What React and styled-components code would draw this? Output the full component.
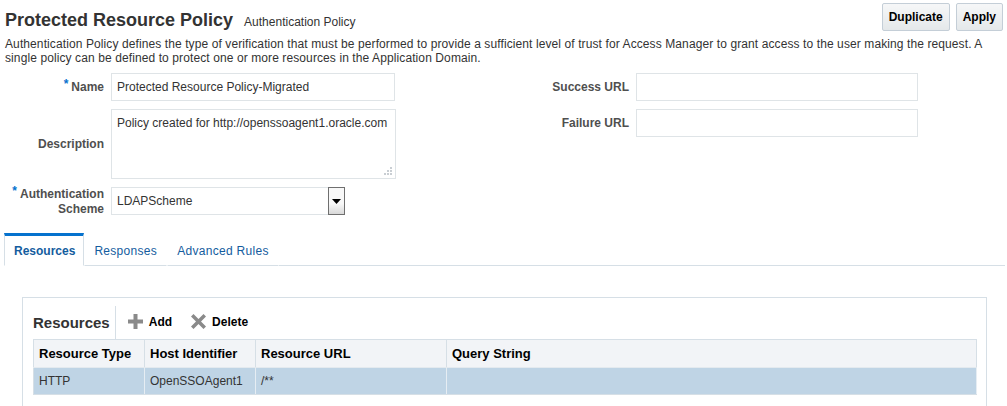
import styled, { createGlobalStyle } from "styled-components";

const GlobalStyle = createGlobalStyle`
  body {
    margin: 0;
    background: #fff;
    font-family: "Liberation Sans", Arial, sans-serif;
    font-size: 12px;
    color: #333;
  }
`;

const App = () => {
  return (
    <Page>
      <GlobalStyle />
      <Header>
        <TitleGroup>
          <Title>Protected Resource Policy</Title>
          <SubTitle>Authentication Policy</SubTitle>
        </TitleGroup>
        <Buttons>
          <Button>Duplicate</Button>
          <Button>Apply</Button>
        </Buttons>
      </Header>
      <Intro>
        Authentication Policy defines the type of verification that must be performed to provide a sufficient level of trust for Access Manager to grant access to the user making the request. A
        single policy can be defined to protect one or more resources in the Application Domain.
      </Intro>

      <Form>
        <LeftGrid>
          <Label>
            <Star>*</Star>Name
          </Label>
          <Input>Protected Resource Policy-Migrated</Input>
          <Label>Description</Label>
          <TextArea>
            Policy created for http://openssoagent1.oracle.com
            <Grip viewBox="0 0 9 9">
              <rect x="6" y="0" width="2" height="2" />
              <rect x="3" y="3" width="2" height="2" />
              <rect x="6" y="3" width="2" height="2" />
              <rect x="0" y="6" width="2" height="2" />
              <rect x="3" y="6" width="2" height="2" />
              <rect x="6" y="6" width="2" height="2" />
            </Grip>
          </TextArea>
          <Label $twoLine>
            <Star>*</Star>Authentication
            <br />
            Scheme
          </Label>
          <Select>
            <SelectValue>LDAPScheme</SelectValue>
            <SelectButton>
              <svg width="9" height="5" viewBox="0 0 9 5">
                <path d="M0 0h9L4.5 5z" fill="#000" />
              </svg>
            </SelectButton>
          </Select>
        </LeftGrid>
        <RightGrid>
          <Label>Success URL</Label>
          <Input $wide />
          <Label>Failure URL</Label>
          <Input $wide />
        </RightGrid>
      </Form>

      <Tabs>
        <Tab $active>Resources</Tab>
        <Tab>Responses</Tab>
        <Tab>Advanced Rules</Tab>
        <TabFill />
      </Tabs>

      <Panel>
        <Toolbar>
          <ToolbarTitle>Resources</ToolbarTitle>
          <ToolButton>
            <svg width="15" height="15" viewBox="0 0 15 15">
              <path d="M5.5 0h4v5.5H15v4H9.5V15h-4V9.5H0v-4h5.5z" fill="#8a8a8a" />
            </svg>
            Add
          </ToolButton>
          <ToolButton>
            <svg width="15" height="15" viewBox="0 0 15 15">
              <path d="M2.5 0L7.5 5 12.5 0 15 2.5 10 7.5 15 12.5 12.5 15 7.5 10 2.5 15 0 12.5 5 7.5 0 2.5z" fill="#8a8a8a" />
            </svg>
            Delete
          </ToolButton>
        </Toolbar>
        <Table>
          <colgroup>
            <col style={{ width: 111 }} />
            <col style={{ width: 111 }} />
            <col style={{ width: 191 }} />
            <col />
          </colgroup>
          <thead>
            <tr>
              <Th>Resource Type</Th>
              <Th>Host Identifier</Th>
              <Th>Resource URL</Th>
              <Th>Query String</Th>
            </tr>
          </thead>
          <tbody>
            <tr>
              <Td>HTTP</Td>
              <Td>OpenSSOAgent1</Td>
              <Td>/**</Td>
              <Td></Td>
            </tr>
          </tbody>
        </Table>
      </Panel>
    </Page>
  );
};

const Page = styled.div`
  width: 1007px;
  height: 406px;
  overflow: hidden;
`;
const Header = styled.div`
  display: flex;
  justify-content: space-between;
  align-items: flex-start;
  padding: 3px 4px 0 5px;
`;
const TitleGroup = styled.div`
  display: flex;
  align-items: baseline;
  gap: 11px;
  padding-top: 7px;
`;
const Title = styled.h1`
  margin: 0;
  font-size: 18px;
  font-weight: bold;
  color: #333;
  line-height: 20px;
`;
const SubTitle = styled.span`
  font-size: 12px;
  color: #333;
`;
const Buttons = styled.div`
  display: flex;
  gap: 6px;
`;
const Button = styled.div`
  height: 26px;
  line-height: 26px;
  padding: 0 6px;
  border: 1px solid #c4ced7;
  border-radius: 2px;
  background: linear-gradient(#f6f7f8, #e4e8ea);
  font-weight: bold;
  font-size: 12px;
  color: #000;
`;
const Intro = styled.p`
  margin: 6px 0 0 5px;
  max-width: 985px;
  line-height: 14px;
  font-size: 12px;
  letter-spacing: 0.1px;
  color: #333;
`;
const Form = styled.div`
  display: flex;
  margin-top: 8px;
`;
const LeftGrid = styled.div`
  display: grid;
  grid-template-columns: 99px auto;
  column-gap: 7px;
  row-gap: 8px;
  align-items: center;
  padding-left: 5px;
`;
const RightGrid = styled.div`
  display: grid;
  grid-template-columns: 124px auto;
  column-gap: 7px;
  row-gap: 8px;
  align-content: start;
  align-items: center;
  margin-left: 109px;
`;
const Label = styled.div`
  text-align: right;
  font-weight: bold;
  color: #4f4f4f;
  font-size: 12px;
  line-height: 15px;
  white-space: nowrap;
  margin-bottom: ${(p) => (p.$twoLine ? "-2px" : "0")};
`;
const Star = styled.span`
  color: #0572ce;
  font-size: 12px;
  margin-right: 3px;
  position: relative;
  top: -3px;
`;
const Input = styled.div`
  box-sizing: border-box;
  width: ${(p) => (p.$wide ? "282px" : "284px")};
  height: 28px;
  border: 1px solid #dfe4e7;
  background: #fff;
  padding: 0 5px;
  line-height: 26px;
  font-size: 12px;
  color: #333;
`;
const TextArea = styled.div`
  box-sizing: border-box;
  position: relative;
  width: 285px;
  height: 70px;
  border: 1px solid #dfe4e7;
  padding: 6px 5px;
  line-height: 14px;
  color: #333;
`;
const Grip = styled.svg`
  position: absolute;
  right: 2px;
  bottom: 2px;
  width: 9px;
  height: 9px;
  fill: #c9ced3;
`;
const Select = styled.div`
  display: flex;
  width: 234px;
  height: 28px;
`;
const SelectValue = styled.div`
  flex: 1;
  box-sizing: border-box;
  border: 1px solid #dfe4e7;
  border-right: none;
  padding: 0 5px;
  line-height: 26px;
  color: #333;
`;
const SelectButton = styled.div`
  box-sizing: border-box;
  width: 17px;
  border: 1px solid #6f6f6f;
  background: linear-gradient(#f8f8f8 60%, #d8d8d8);
  display: flex;
  align-items: center;
  justify-content: center;
`;
const Tabs = styled.div`
  display: flex;
  margin-top: 18px;
  padding-left: 4px;
`;
const Tab = styled.div`
  height: 29px;
  line-height: 31px;
  padding: ${(p) => (p.$active ? "0 8px 0 9px" : "0 9px")};
  font-size: 12px;
  letter-spacing: ${(p) => (p.$active ? "0" : "0.3px")};
  color: #145c9e;
  font-weight: ${(p) => (p.$active ? "bold" : "normal")};
  border-top: 3px solid ${(p) => (p.$active ? "#0572ce" : "transparent")};
  border-left: 1px solid ${(p) => (p.$active ? "#d6dfe6" : "transparent")};
  border-right: 1px solid ${(p) => (p.$active ? "#d6dfe6" : "transparent")};
  border-bottom: 1px solid ${(p) => (p.$active ? "transparent" : "#d6dfe6")};
`;
const TabFill = styled.div`
  flex: 1;
  border-bottom: 1px solid #d6dfe6;
  margin-right: 2px;
`;
const Panel = styled.div`
  margin: 31px 20px 0 22px;
  border: 1px solid #d6dfe6;
  border-bottom: none;
  height: 120px;
  padding: 8px 10px 0 10px;
`;
const Toolbar = styled.div`
  display: flex;
  align-items: center;
  height: 33px;
`;
const ToolbarTitle = styled.div`
  font-size: 15px;
  font-weight: bold;
  color: #333;
  padding: 8px 5px 0 0;
  height: 25px;
  border-right: 1px solid #d6dfe6;
  margin-right: 12px;
`;
const ToolButton = styled.div`
  display: flex;
  align-items: center;
  gap: 6px;
  font-weight: bold;
  color: #000;
  margin-right: 19px;
  margin-top: -2px;
`;
const Table = styled.table`
  width: 944px;
  border-collapse: collapse;
  table-layout: fixed;
  border: 1px solid #d6dfe6;
`;
const Th = styled.th`
  text-align: left;
  height: 27px;
  padding: 0 5px;
  background: #f2f4f7;
  font-size: 13px;
  font-weight: bold;
  color: #000;
  border-right: 1px solid #d6dfe6;
  border-bottom: 1px solid #e4eaef;
`;
const Td = styled.td`
  height: 26px;
  padding: 0 5px;
  background: #bfd4e5;
  font-size: 12px;
  color: #333;
  border-right: 1px solid #e6edf3;
  border-bottom: 1px solid #d6dfe6;
`;

export default App;
